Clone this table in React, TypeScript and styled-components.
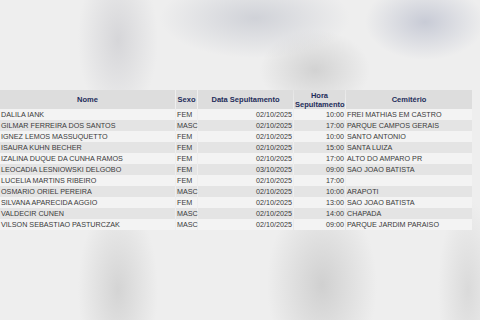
import styled, { createGlobalStyle } from "styled-components";

const GlobalStyle = createGlobalStyle`
  html, body {
    margin: 0;
    padding: 0;
    width: 480px;
    height: 320px;
    overflow: hidden;
  }
  body {
    background-color: #eeeeee;
    background-image:
      radial-gradient(ellipse 95px 40px at 255px 18px, rgba(208, 210, 216, 1), rgba(208, 210, 216, 0) 100%),
      radial-gradient(ellipse 60px 38px at 425px 22px, rgba(200, 203, 214, 1), rgba(200, 203, 214, 0) 100%),
      radial-gradient(ellipse 40px 80px at 118px 40px, rgba(214, 214, 217, 1), rgba(214, 214, 217, 0) 100%),
      radial-gradient(ellipse 55px 40px at 315px 70px, rgba(210, 210, 210, 1), rgba(210, 210, 210, 0) 100%),
      radial-gradient(ellipse 40px 90px at 118px 290px, rgba(212, 212, 212, 1), rgba(212, 212, 212, 0) 100%),
      radial-gradient(ellipse 55px 90px at 322px 285px, rgba(208, 208, 208, 1), rgba(208, 208, 208, 0) 100%),
      radial-gradient(ellipse 30px 90px at 468px 290px, rgba(218, 218, 218, 1), rgba(218, 218, 218, 0) 100%);
    font-family: "Liberation Sans", Arial, sans-serif;
  }
`;

const Page = styled.main`
  padding-top: 90px;
`;

const Table = styled.table`
  width: 474px;
  border-collapse: separate;
  border-spacing: 1px 0;
  margin-left: -1px;
  table-layout: fixed;
`;

const HeadCell = styled.th`
  box-sizing: border-box;
  height: 19px;
  padding: 0 1px;
  background: #dddddd;
  color: #1e2c5a;
  font-size: 7.5px;
  font-weight: bold;
  text-align: center;
  line-height: 9px;
  vertical-align: middle;
`;

const Row = styled.tr<{ $alt: boolean }>`
  background: ${(p) => (p.$alt ? "#e4e4e4" : "#f3f3f3")};
`;

const Cell = styled.td<{ $right?: boolean }>`
  box-sizing: border-box;
  height: 11px;
  padding: ${(p) => (p.$right ? "0 1px 0 0" : "0 0 0 1px")};
  color: #3a3a3a;
  font-size: 7.2px;
  line-height: 11px;
  white-space: nowrap;
  text-align: ${(p) => (p.$right ? "right" : "left")};
`;

type Burial = {
  nome: string;
  sexo: string;
  data: string;
  hora: string;
  cemiterio: string;
};

const rows: Burial[] = [
  { nome: "DALILA IANK", sexo: "FEM", data: "02/10/2025", hora: "10:00", cemiterio: "FREI MATHIAS EM CASTRO" },
  { nome: "GILMAR FERREIRA DOS SANTOS", sexo: "MASC", data: "02/10/2025", hora: "17:00", cemiterio: "PARQUE CAMPOS GERAIS" },
  { nome: "IGNEZ LEMOS MASSUQUETTO", sexo: "FEM", data: "02/10/2025", hora: "10:00", cemiterio: "SANTO ANTONIO" },
  { nome: "ISAURA KUHN BECHER", sexo: "FEM", data: "02/10/2025", hora: "15:00", cemiterio: "SANTA LUIZA" },
  { nome: "IZALINA DUQUE DA CUNHA RAMOS", sexo: "FEM", data: "02/10/2025", hora: "17:00", cemiterio: "ALTO DO AMPARO PR" },
  { nome: "LEOCADIA LESNIOWSKI DELGOBO", sexo: "FEM", data: "03/10/2025", hora: "09:00", cemiterio: "SAO JOAO BATISTA" },
  { nome: "LUCELIA MARTINS RIBEIRO", sexo: "FEM", data: "02/10/2025", hora: "17:00", cemiterio: "" },
  { nome: "OSMARIO ORIEL PEREIRA", sexo: "MASC", data: "02/10/2025", hora: "10:00", cemiterio: "ARAPOTI" },
  { nome: "SILVANA APARECIDA AGGIO", sexo: "FEM", data: "02/10/2025", hora: "13:00", cemiterio: "SAO JOAO BATISTA" },
  { nome: "VALDECIR CUNEN", sexo: "MASC", data: "02/10/2025", hora: "14:00", cemiterio: "CHAPADA" },
  { nome: "VILSON SEBASTIAO PASTURCZAK", sexo: "MASC", data: "02/10/2025", hora: "09:00", cemiterio: "PARQUE JARDIM PARAISO" },
];

const App = () => {
  return (
    <Page>
      <GlobalStyle />
      <Table>
        <colgroup>
          <col style={{ width: 175 }} />
          <col style={{ width: 21 }} />
          <col style={{ width: 95 }} />
          <col style={{ width: 51 }} />
          <col style={{ width: 126 }} />
        </colgroup>
        <thead>
          <tr>
            <HeadCell>Nome</HeadCell>
            <HeadCell>Sexo</HeadCell>
            <HeadCell>Data Sepultamento</HeadCell>
            <HeadCell>Hora Sepultamento</HeadCell>
            <HeadCell>Cemitério</HeadCell>
          </tr>
        </thead>
        <tbody>
          {rows.map((r, i) => (
            <Row key={r.nome} $alt={i % 2 === 1}>
              <Cell>{r.nome}</Cell>
              <Cell>{r.sexo}</Cell>
              <Cell $right>{r.data}</Cell>
              <Cell $right>{r.hora}</Cell>
              <Cell>{r.cemiterio}</Cell>
            </Row>
          ))}
        </tbody>
      </Table>
    </Page>
  );
};

export default App;
